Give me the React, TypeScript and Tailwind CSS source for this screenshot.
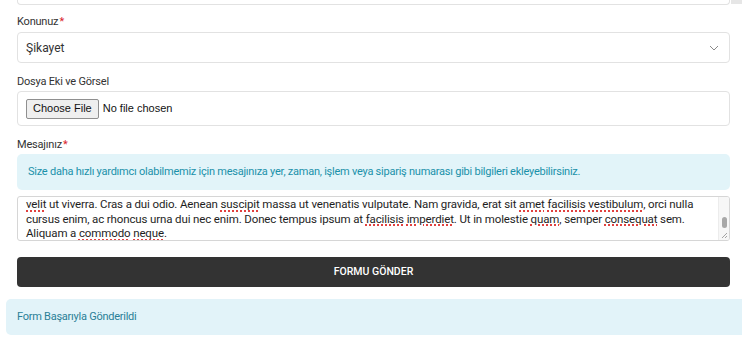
import React from "react";

const Req = () => <span className="text-[#d9232d] ml-[1px]">*</span>;

const Typo = ({ children }: { children: React.ReactNode }) => (
  <span className="underline decoration-dotted decoration-[#e0413f] decoration-[1.5px] underline-offset-[2px]">
    {children}
  </span>
);

export default function App() {
  return (
    <div className="w-[742px] h-[339px] overflow-hidden bg-white text-[#333] font-['Roboto',sans-serif]">
      {/* previous field, cut off at the top */}
      <div className="flex">
        <div className="ml-[17px] w-[713px] h-[5px] border-x border-b border-[#e2e2e2] rounded-b-[4px]" />
        <div className="ml-[1px] w-[11px] h-[4px] bg-[#e6e6e6]" />
      </div>

      <div className="ml-[17px] w-[713px]">
        {/* Konunuz */}
        <label className="block mt-[9px] mb-[2px] text-[11px] tracking-[-0.2px] leading-[16px]">
          Konunuz<Req />
        </label>
        <div className="h-[31px] border border-[#e2e2e2] rounded-[4px] flex items-center justify-between pl-[8px] pr-[10px]">
          <span className="text-[12px]">Şikayet</span>
          <svg width="10" height="6" viewBox="0 0 10 6" fill="none">
            <path d="M1 1l4 4 4-4" stroke="#8a8a8a" strokeWidth="1" />
          </svg>
        </div>

        {/* Dosya */}
        <label className="block mt-[11px] mb-[1px] text-[11px] tracking-[-0.2px] leading-[16px]">
          Dosya Eki ve Görsel
        </label>
        <div className="h-[35px] border border-[#e2e2e2] rounded-[4px] flex items-center pl-[8px] font-['Liberation_Sans',sans-serif] text-[11px]">
          <button className="h-[20px] px-[6px] border border-[#8f8f8f] rounded-[2px] bg-[#efefef] text-[#111]">
            Choose File
          </button>
          <span className="ml-[4px] text-[#111]">No file chosen</span>
        </div>

        {/* Mesajınız */}
        <label className="block mt-[11px] mb-[1px] text-[11px] tracking-[-0.2px] leading-[16px]">
          Mesajınız<Req />
        </label>
        <div className="h-[36px] rounded-[5px] bg-[#e2f4f9] flex items-center px-[11px] text-[11px] tracking-[-0.24px] text-[#1a91aa]">
          Size daha hızlı yardımcı olabilmemiz için mesajınıza yer, zaman, işlem veya sipariş numarası gibi bilgileri ekleyebilirsiniz.
        </div>

        <div className="mt-[6px] h-[45px] border border-[#d6d6d6] rounded-[3px] flex overflow-hidden">
          <div className="flex-1 pl-[8px] pr-[6px] text-[11.5px] tracking-[-0.13px] leading-[14.5px] text-[#1e1e1e] whitespace-nowrap">
            <div>
              <Typo>velit</Typo> ut viverra. Cras a dui odio. Aenean <Typo>suscipit</Typo> massa ut venenatis vulputate. Nam gravida, erat sit{" "}
              <Typo>amet</Typo> <Typo>facilisis</Typo> <Typo>vestibulum</Typo>, orci nulla
            </div>
            <div>
              cursus enim, ac rhoncus urna dui nec enim. Donec tempus ipsum at <Typo>facilisis</Typo> <Typo>imperdiet</Typo>. Ut in molestie{" "}
              <Typo>quam</Typo>, semper <Typo>consequat</Typo> sem.
            </div>
            <div>
              Aliquam a <Typo>commodo</Typo> <Typo>neque</Typo>.
            </div>
          </div>
          <div className="relative w-[11px] bg-[#f7f7f7] border-l border-[#ececec] flex flex-col items-center">
            <div className="mt-[20px] w-[5px] h-[11px] rounded-full bg-[#a8a8a8]" />
            <svg className="absolute right-[1px] bottom-[1px]" width="7" height="7" viewBox="0 0 7 7">
              <path d="M6 1L1 6M6 4L4 6" stroke="#9a9a9a" strokeWidth="0.9" />
            </svg>
          </div>
        </div>

        <button className="mt-[16px] w-full h-[30px] rounded-[4px] bg-[#333333] text-white text-[10.5px] font-medium">
          FORMU GÖNDER
        </button>
      </div>

      <div className="mt-[12px] ml-[6px] w-[740px] h-[36px] rounded-[5px] bg-[#e2f3f9] flex items-center pl-[11px] text-[11px] tracking-[-0.25px] text-[#2a7f97]">
        Form Başarıyla Gönderildi
      </div>
    </div>
  );
}
